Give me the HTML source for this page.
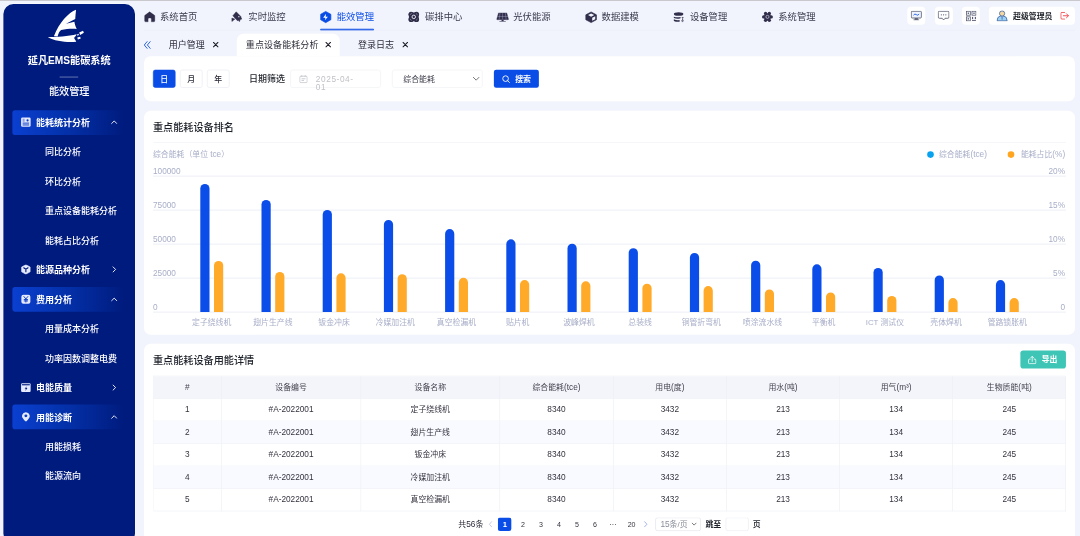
<!DOCTYPE html>
<html lang="zh-CN">
<head>
<meta charset="utf-8">
<title>延凡EMS能碳系统</title>
<style>
*{box-sizing:border-box;margin:0;padding:0}
html,body{width:1080px;height:536px;overflow:hidden;background:#f2f4fd}
body{font-family:"Liberation Sans","Noto Sans CJK SC",sans-serif;position:relative}
#topline{position:absolute;left:0;top:0;width:1080px;height:1px;background:#c9c9cd;z-index:10}
#app{position:absolute;left:0;top:0;width:1920px;height:953px;transform:scale(.5625);transform-origin:0 0;color:#33334a;font-size:16px}
.abs{position:absolute}
/* sidebar */
#side{position:absolute;left:6px;top:7.4px;width:234px;height:960px;background:#001b7e;border-radius:18px;box-shadow:0 0 0 1px rgba(255,255,255,.55)}
#side .title{position:absolute;left:0;width:234px;top:86.4px;height:28px;line-height:28px;text-align:center;color:#fff;font-size:18px;font-weight:700}
#side .bar{position:absolute;left:100px;top:128.7px;width:33px;height:2px;background:rgba(255,255,255,.35)}
#side .sub{position:absolute;left:0;width:234px;top:141.7px;height:28px;line-height:28px;text-align:center;color:#fff;font-size:18px;font-weight:500}
.mi{position:absolute;left:16px;width:198px;height:44px;line-height:44px;color:#fff;font-size:16px;font-weight:500;white-space:nowrap}
.mi.g{font-weight:700}
.mi.on::before{content:"";position:absolute;left:0;top:-1.2px;width:100%;height:44px;background:linear-gradient(90deg,#0a3fd0 0%,#0432ad 45%,rgba(0,27,126,0) 100%);border-radius:5px}
.mi>*{z-index:1}
.mi svg.ic{position:absolute;left:14.8px;top:11.5px;width:18px;height:18px}
.mi .t{position:absolute;left:42.2px;top:0}
.mi .s{position:absolute;left:58px;top:0}
.mi svg.ch{position:absolute;left:174.5px;top:14.5px;width:12px;height:12px}
/* top nav */
.nv{position:absolute;top:16px;height:28px;line-height:28px;font-size:16.6px;color:#3a3a4e;white-space:nowrap}
.nv svg{position:absolute;left:0;top:4px;width:20px;height:20px}
.nv span{position:absolute;left:28.5px;top:0}
.nv.on{color:#0a4de6}
#navline{position:absolute;left:256px;top:52.6px;width:1655px;height:1px;background:#e6e9f6}
#navul{position:absolute;left:569px;top:51.2px;width:96px;height:3px;background:#0a4de6;border-radius:2px}
.ib{position:absolute;top:12px;height:32px;background:#fff;border-radius:7px}
/* tabs */
.tab{position:absolute;top:60px;height:40px;line-height:40px;font-size:16px;color:#2c2c3a;white-space:nowrap}
.tab.on{background:#fff;border-radius:12px 12px 0 0}
.tab .x{position:absolute;top:14px;width:11px;height:11px}
/* panels */
.panel{position:absolute;left:256px;width:1655px;background:#fff;border-radius:12px}
.btn{position:absolute;top:24px;width:40px;height:32px;line-height:30px;text-align:center;font-size:14px;border:1px solid #e4e7f0;border-radius:4px;color:#2c2c3a;background:#fff;font-weight:500}
.btn.on{background:#0a4de6;border-color:#0a4de6;color:#fff}
.ptitle{position:absolute;left:16px;font-size:18px;font-weight:500;color:#1d2129;white-space:nowrap;line-height:28px;height:28px}
/*TBLCSS*/
.tbl{position:absolute;left:16px;top:56.5px;width:1622.4px;height:240px;border-left:1px solid #ebeef5;border-top:1px solid #ebeef5}
.tr{position:absolute;left:0;width:1622.4px;height:40.2px;background:#fff}
.tr.th{background:#f4f5fb}
.tr.ev{background:#f9faff}
.td{position:absolute;top:0;height:40.2px;line-height:39px;text-align:center;font-size:14px;color:#33333f;border-right:1px solid #ebeef5;border-bottom:1px solid #ebeef5;white-space:nowrap}
.th .td{color:#44444f}
.n{font-size:14.7px!important}
.pt{position:absolute;top:309px;height:24px;line-height:24px;white-space:nowrap}
.pn{position:absolute;top:309px;width:32px;height:24px;line-height:24px;text-align:center;font-size:12.6px;color:#33333f}
/*/TBLCSS*/</style>
</head>
<body>
<div id="topline"></div>
<div id="app">
<!--SIDE-->
<div id="side">
<svg class="abs" style="left:65.1px;top:0.1px;width:106.7px;height:78.2px" viewBox="0 0 731 536"><g fill="#fff">
<path d="M440 72 C350 105 235 225 170 395 L215 398 C225 355 240 328 258 318 C320 305 390 300 448 305 C432 270 422 240 420 216 L318 240 L430 185 C432 150 436 110 440 72 Z"/>
<path d="M95 405 C200 402 350 397 447 370 C442 388 426 400 416 416 C428 436 440 452 442 460 C330 472 180 452 95 405 Z"/>
<path d="M478 348 L525 326 L535 352 L490 378 Z"/><path d="M455 410 L490 400 L497 420 L462 434 Z"/><path d="M452 372 L470 364 L475 380 L456 388 Z"/>
</g></svg>
<div class="title">延凡EMS能碳系统</div><div class="bar"></div><div class="sub">能效管理</div>
<div class="mi g on" style="top:189.4px"><svg class="ic" viewBox="0 0 18 18"><rect x="0.5" y="0.8" width="17" height="16.6" rx="2.5" fill="#e6eaff"/><rect x="3.2" y="3" width="3.6" height="5.6" fill="#8fa4ee"/><circle cx="12" cy="6" r="1.9" fill="#0a3cc4"/><rect x="3.2" y="10" width="11.6" height="1.7" fill="#0a3cc4"/><rect x="3.2" y="13.3" width="11.6" height="1.7" fill="#0a3cc4"/></svg><span class="t">能耗统计分析</span><svg class="ch" viewBox="0 0 12 12"><path d="M1.5 8.5 L6 4 L10.5 8.5" fill="none" stroke="#fff" stroke-width="1.6" stroke-linecap="round" stroke-linejoin="round"/></svg></div>
<div class="mi" style="top:241.8px"><span class="s">同比分析</span></div>
<div class="mi" style="top:294.2px"><span class="s">环比分析</span></div>
<div class="mi" style="top:346.5px"><span class="s">重点设备能耗分析</span></div>
<div class="mi" style="top:398.9px"><span class="s">能耗占比分析</span></div>
<div class="mi g" style="top:451.3px"><svg class="ic" viewBox="0 0 18 18"><path d="M9 0.5 L16.6 4.7 V13.3 L9 17.5 L1.4 13.3 V4.7 Z" fill="#e6eaff" stroke="#e6eaff" stroke-width="1" stroke-linejoin="round"/><path d="M5.2 6 L9 8.8 L12.8 6 M9 8.8 V13" fill="none" stroke="#001b7e" stroke-width="2" stroke-linecap="round"/></svg><span class="t">能源品种分析</span><svg class="ch" viewBox="0 0 12 12"><path d="M4 1.5 L8.5 6 L4 10.5" fill="none" stroke="#fff" stroke-width="1.6" stroke-linecap="round" stroke-linejoin="round"/></svg></div>
<div class="mi g on" style="top:503.7px"><svg class="ic" viewBox="0 0 18 18"><rect x="1" y="1" width="16" height="16" rx="3.5" fill="#e6eaff"/><path d="M5.5 4.2 L9 8.4 L12.5 4.2 M9 8.4 V14 M6 9.6 H12 M6 12 H12" fill="none" stroke="#0a3cc4" stroke-width="1.7" stroke-linecap="round" stroke-linejoin="round"/></svg><span class="t">费用分析</span><svg class="ch" viewBox="0 0 12 12"><path d="M1.5 8.5 L6 4 L10.5 8.5" fill="none" stroke="#fff" stroke-width="1.6" stroke-linecap="round" stroke-linejoin="round"/></svg></div>
<div class="mi" style="top:556.1px"><span class="s">用量成本分析</span></div>
<div class="mi" style="top:608.4px"><span class="s">功率因数调整电费</span></div>
<div class="mi g" style="top:660.8px"><svg class="ic" viewBox="0 0 18 18"><rect x="0.5" y="1.5" width="17" height="15.5" rx="2" fill="#e6eaff"/><rect x="2" y="3" width="14" height="2" fill="#001b7e"/><path d="M10.5 6.5 L6.8 11 H9 L8 15 L11.8 9.8 H9.6 Z" fill="#001b7e"/></svg><span class="t">电能质量</span><svg class="ch" viewBox="0 0 12 12"><path d="M4 1.5 L8.5 6 L4 10.5" fill="none" stroke="#fff" stroke-width="1.6" stroke-linecap="round" stroke-linejoin="round"/></svg></div>
<div class="mi g on" style="top:713.2px"><svg class="ic" viewBox="0 0 18 18"><path d="M9 0.8 a7 7 0 0 1 4.2 12.6 L10.2 17 h-2.4 L4.8 13.4 A7 7 0 0 1 9 0.8 Z" fill="#e6eaff"/><circle cx="9" cy="7.3" r="2.6" fill="#0a3cc4"/></svg><span class="t">用能诊断</span><svg class="ch" viewBox="0 0 12 12"><path d="M1.5 8.5 L6 4 L10.5 8.5" fill="none" stroke="#fff" stroke-width="1.6" stroke-linecap="round" stroke-linejoin="round"/></svg></div>
<div class="mi" style="top:765.6px"><span class="s">用能损耗</span></div>
<div class="mi" style="top:818.0px"><span class="s">能源流向</span></div>
</div>
<!--/SIDE-->
<!--NAV-->
<svg class="abs" style="left:248.89px;top:14.22px;width:35.56px;height:32px" viewBox="0 0 596 536"><path d="M285 118 L432 222 Q440 228 440 240 V385 Q440 415 410 415 H336 V330 Q336 300 306 300 H270 Q240 300 240 330 V415 H166 Q136 415 136 385 V240 Q136 228 144 222 Z" fill="#302e4b" stroke="#302e4b" stroke-width="10" stroke-linejoin="round"/></svg>
<div class="nv" style="left:256px"><span>系统首页</span></div>
<svg class="abs" style="left:405.33px;top:14.22px;width:35.56px;height:32px" viewBox="0 0 596 536"><g fill="#302e4b" stroke="#302e4b" stroke-width="14" stroke-linejoin="round"><path d="M250 118 L150 232 L285 380 L415 335 L380 248 Z"/><path d="M122 305 L210 335 L122 405 Z"/><path d="M325 365 L362 355 L355 400 L338 408 Z"/></g><rect x="308" y="242" width="40" height="40" fill="#b9bad0"/></svg>
<div class="nv" style="left:413px"><span>实时监控</span></div>
<svg class="abs" style="left:561.78px;top:14.22px;width:35.56px;height:32px" viewBox="0 0 596 536"><path d="M285 105 L440 192 V353 L285 440 L135 353 V192 Z" fill="#0a4de6" stroke="#0a4de6" stroke-width="20" stroke-linejoin="round"/><path d="M295 175 L210 292 H278 L262 372 L352 262 H285 Z" fill="#fff"/></svg>
<div class="nv on" style="left:570px"><span>能效管理</span></div>
<svg class="abs" style="left:718.22px;top:14.22px;width:35.56px;height:32px" viewBox="0 0 596 536"><g fill="#302e4b"><circle cx="215" cy="190" r="78"/><circle cx="375" cy="190" r="78"/><circle cx="215" cy="345" r="78"/><circle cx="375" cy="345" r="78"/><circle cx="295" cy="268" r="105"/><rect x="150" y="137" width="290" height="262" rx="50"/></g><circle cx="295" cy="268" r="52" fill="#302e4b" stroke="#f2f4fd" stroke-width="26"/><g stroke="#c9cadb" stroke-width="14" stroke-linecap="round"><path d="M195 195 L225 170"/><path d="M370 175 L398 198"/><path d="M192 340 L222 368"/><path d="M368 365 L398 338"/></g></svg>
<div class="nv" style="left:727px"><span>碳排中心</span></div>
<svg class="abs" style="left:876.44px;top:14.22px;width:35.56px;height:32px" viewBox="0 0 596 536"><path d="M170 150 H418 L470 335 Q474 352 456 352 H134 Q116 352 120 335 Z" fill="#302e4b" stroke="#302e4b" stroke-width="10" stroke-linejoin="round"/><path d="M294 155 V350 M135 255 H455 M215 155 L190 350 M375 155 L400 350" stroke="#a9abc4" stroke-width="13" fill="none"/><rect x="262" y="352" width="62" height="45" fill="#302e4b"/><rect x="195" y="395" width="195" height="26" rx="10" fill="#6d6c85"/></svg>
<div class="nv" style="left:884px"><span>光伏能源</span></div>
<svg class="abs" style="left:1032.89px;top:14.22px;width:35.56px;height:32px" viewBox="0 0 596 536"><path d="M300 122 L458 207 V353 L300 438 L142 353 V207 Z" fill="#302e4b" stroke="#302e4b" stroke-width="20" stroke-linejoin="round"/><path d="M300 168 L392 215 L300 262 L208 215 Z" fill="#f2f4fd"/><path d="M332 292 L422 248 V340 L332 386 Z" fill="#f2f4fd"/></svg>
<div class="nv" style="left:1041px"><span>数据建模</span></div>
<svg class="abs" style="left:1189.33px;top:14.22px;width:35.56px;height:32px" viewBox="0 0 596 536"><g fill="#302e4b"><ellipse cx="292" cy="182" rx="142" ry="55"/><path d="M150 262 Q250 300 350 268 V312 Q250 345 150 305 Z"/><path d="M150 340 Q235 378 322 362 V410 Q235 425 150 388 Z"/></g><g stroke="#302e4b" stroke-width="20" fill="none"><path d="M412 285 V375 M385 285 H440"/><circle cx="408" cy="385" r="24"/></g></svg>
<div class="nv" style="left:1198px"><span>设备管理</span></div>
<svg class="abs" style="left:1345.78px;top:14.22px;width:35.56px;height:32px" viewBox="0 0 596 536"><g fill="#302e4b"><circle cx="308" cy="268" r="105"/><circle cx="252" cy="165" r="50"/><circle cx="364" cy="165" r="50"/><circle cx="252" cy="371" r="50"/><circle cx="364" cy="371" r="50"/><circle cx="195" cy="268" r="50"/><circle cx="421" cy="268" r="50"/></g><circle cx="308" cy="268" r="46" fill="#302e4b" stroke="#c9cadb" stroke-width="22"/></svg>
<div class="nv" style="left:1355px"><span>系统管理</span></div>
<div id="navul"></div><div id="navline"></div>
<div class="ib" style="left:1613px;width:32px"><svg class="abs" style="left:6px;top:7px;width:20px;height:18px" viewBox="0 0 20 18"><rect x="1" y="1" width="18" height="12" rx="1.5" fill="#eef3ff" stroke="#555a70" stroke-width="1.5"/><path d="M5 8 Q7.5 4.5 10 7 T15 6" fill="none" stroke="#0a4de6" stroke-width="1.5"/><path d="M7.5 14 H12.5 V15.5 H7.5 Z M5 16.2 H15" fill="#555a70" stroke="#555a70" stroke-width="1.3"/></svg></div>
<div class="ib" style="left:1661.5px;width:32px"><svg class="abs" style="left:5.5px;top:7px;width:21px;height:18px" viewBox="0 0 21 18"><path d="M3 1 H18 Q20 1 20 3 V11.5 Q20 13.5 18 13.5 H13 L10.5 16.5 L8 13.5 H3 Q1 13.5 1 11.5 V3 Q1 1 3 1 Z" fill="#fff" stroke="#555a70" stroke-width="1.5" stroke-linejoin="round"/><g fill="#555a70"><circle cx="6.5" cy="7.3" r="1.1"/><circle cx="10.5" cy="7.3" r="1.1"/><circle cx="14.5" cy="7.3" r="1.1"/></g></svg></div>
<div class="ib" style="left:1710px;width:32px"><svg class="abs" style="left:6.5px;top:6.5px;width:19px;height:19px" viewBox="0 0 19 19"><g fill="none" stroke="#555a70" stroke-width="1.4"><rect x="1" y="1" width="7" height="7"/><rect x="11" y="1" width="7" height="7"/><rect x="1" y="11" width="7" height="7"/></g><g fill="#555a70"><rect x="3.3" y="3.3" width="2.4" height="2.4"/><rect x="13.3" y="3.3" width="2.4" height="2.4"/><rect x="3.3" y="13.3" width="2.4" height="2.4"/><rect x="11" y="11" width="2" height="4"/><rect x="16" y="11" width="2" height="4"/><rect x="11" y="16.5" width="7" height="1.6"/></g></svg></div>
<div class="ib" style="left:1758px;width:153px"><svg class="abs" style="left:13px;top:6px;width:21px;height:20px" viewBox="0 0 21 20"><path d="M1.5 19 Q1.5 11.5 7.5 10.5 L10.5 12.5 L13.5 10.5 Q19.5 11.5 19.5 19 Z" fill="#9fd0f5" stroke="#2c5a9a" stroke-width="1.3" stroke-linejoin="round"/><circle cx="10.5" cy="6" r="4.6" fill="#f7d9a6" stroke="#2c5a9a" stroke-width="1.3"/><path d="M10.5 13 V17" stroke="#2c5a9a" stroke-width="1.2"/></svg><span class="abs" style="left:43px;top:0;line-height:32px;font-size:14px;font-weight:700;color:#1d2129;white-space:nowrap">超级管理员</span><svg class="abs" style="left:127px;top:9px;width:16px;height:14px" viewBox="0 0 16 14"><path d="M7.5 1 H3 Q1 1 1 3 V11 Q1 13 3 13 H7.5" fill="none" stroke="#f5474f" stroke-width="1.7" stroke-linecap="round"/><path d="M5.5 7 H14 M11 3.5 L14.5 7 L11 10.5" fill="none" stroke="#f5474f" stroke-width="1.7" stroke-linecap="round" stroke-linejoin="round"/></svg></div>
<!--/NAV-->
<!--TABS-->
<svg class="abs" style="left:255px;top:72px;width:14px;height:16px" viewBox="0 0 14 16"><path d="M6.5 2 L1.5 8 L6.5 14 M12 2 L7 8 L12 14" fill="none" stroke="#0a4de6" stroke-width="1.5" stroke-linecap="round" stroke-linejoin="round"/></svg>
<div class="tab" style="left:283px;width:122px"><span class="abs" style="left:17px">用户管理</span><svg class="x" style="left:95px" viewBox="0 0 11 11"><path d="M1.5 1.5 L9.5 9.5 M9.5 1.5 L1.5 9.5" stroke="#1d1d2a" stroke-width="2" stroke-linecap="round"/></svg></div>
<div class="tab on" style="left:421px;width:183px"><span class="abs" style="left:16px;letter-spacing:.15px">重点设备能耗分析</span><svg class="x" style="left:157px" viewBox="0 0 11 11"><path d="M1.5 1.5 L9.5 9.5 M9.5 1.5 L1.5 9.5" stroke="#1d1d2a" stroke-width="2" stroke-linecap="round"/></svg></div>
<div class="tab" style="left:619px;width:122px"><span class="abs" style="left:17.5px">登录日志</span><svg class="x" style="left:96px" viewBox="0 0 11 11"><path d="M1.5 1.5 L9.5 9.5 M9.5 1.5 L1.5 9.5" stroke="#1d1d2a" stroke-width="2" stroke-linecap="round"/></svg></div>
<!--/TABS-->
<!--FILTER-->
<div class="panel" style="top:100px;height:80px">
<div class="btn on" style="left:16px">日</div><div class="btn" style="left:64px">月</div><div class="btn" style="left:112px">年</div>
<span class="abs" style="left:186.5px;top:24px;line-height:32px;font-size:16px;color:#1d2129;font-weight:500;white-space:nowrap">日期筛选</span>
<div class="abs" style="left:260px;top:24px;width:160.5px;height:32px;border:1px solid #eeeff3;border-radius:4px">
<svg class="abs" style="left:15px;top:8px;width:15px;height:15px" viewBox="0 0 15 15"><rect x="1" y="2.5" width="13" height="11.5" rx="1.5" fill="none" stroke="#b9bcc6" stroke-width="1.3"/><path d="M4.5 0.8 V3.5 M10.5 0.8 V3.5 M4 7 H11 M4 10 H8.5" stroke="#b9bcc6" stroke-width="1.3" fill="none"/></svg>
<div class="abs" style="left:44.5px;top:8.5px;width:75px;font-size:14.7px;line-height:14.6px;color:#c0c1c6;letter-spacing:1.05px;word-break:break-all">2025-04-01</div></div>
<div class="abs" style="left:441px;top:24px;width:160.5px;height:32px;border:1px solid #eeeff3;border-radius:4px">
<span class="abs" style="left:19px;top:0;line-height:30px;font-size:14px;color:#3c3c4a;white-space:nowrap">综合能耗</span>
<svg class="abs" style="left:142px;top:10px;width:13px;height:10px" viewBox="0 0 13 10"><path d="M1.5 2.5 L6.5 7.5 L11.5 2.5" fill="none" stroke="#555" stroke-width="1.4" stroke-linecap="round" stroke-linejoin="round"/></svg></div>
<div class="abs" style="left:622px;top:24px;width:80px;height:32px;background:#0a4de6;border-radius:4px">
<svg class="abs" style="left:14px;top:8.5px;width:15px;height:15px" viewBox="0 0 15 15"><circle cx="6.8" cy="6.8" r="5" fill="none" stroke="#fff" stroke-width="1.6"/><path d="M10.6 10.6 L13.6 13.6" stroke="#fff" stroke-width="1.6" stroke-linecap="round"/></svg>
<span class="abs" style="left:38px;top:0;line-height:32px;font-size:14px;font-weight:700;color:#fff;white-space:nowrap">搜索</span></div>
</div>
<!--/FILTER-->
<!--CHART-->
<div class="panel" style="top:197px;height:398px"><div class="ptitle" style="top:15.6px">重点能耗设备排名</div>
<svg class="abs" style="left:0;top:0;width:1655px;height:398px" viewBox="144 110.8125 930.9375 223.875" font-size="7.875" fill="#a8aec8" font-family="Liberation Sans,Noto Sans CJK SC,sans-serif">
<rect x="153" y="142" width="913" height="0.6" fill="#eef0f7"/>
<text x="153" y="157.3">综合能耗（单位 <tspan font-size="8.25">tce</tspan>）</text>
<rect x="153" y="175.7" width="913" height="0.8" fill="#e9ebf3"/>
<text x="153" y="174.0" font-size="8.25">100000</text><text x="1065" y="174.0" text-anchor="end" font-size="8.25">20%</text>
<rect x="153" y="209.7" width="913" height="0.8" fill="#e9ebf3"/>
<text x="153" y="208.0" font-size="8.25">75000</text><text x="1065" y="208.0" text-anchor="end" font-size="8.25">15%</text>
<rect x="153" y="243.7" width="913" height="0.8" fill="#e9ebf3"/>
<text x="153" y="242.0" font-size="8.25">50000</text><text x="1065" y="242.0" text-anchor="end" font-size="8.25">10%</text>
<rect x="153" y="277.7" width="913" height="0.8" fill="#e9ebf3"/>
<text x="153" y="276.0" font-size="8.25">25000</text><text x="1065" y="276.0" text-anchor="end" font-size="8.25">5%</text>
<rect x="153" y="311.7" width="913" height="0.8" fill="#e9ebf3"/>
<text x="153" y="310.0" font-size="8.25">0</text><text x="1065" y="310.0" text-anchor="end" font-size="8.25">0</text>
<path d="M200.3 312.1 V188.6 A4.6 4.6 0 0 1 209.5 188.6 V312.1 Z" fill="#0a4de8"/>
<path d="M214.0 312.1 V265.6 A4.6 4.6 0 0 1 223.2 265.6 V312.1 Z" fill="#ffaa28"/>
<text x="211.7" y="325.2" text-anchor="middle">定子绕线机</text>
<path d="M261.5 312.1 V204.6 A4.6 4.6 0 0 1 270.7 204.6 V312.1 Z" fill="#0a4de8"/>
<path d="M275.2 312.1 V276.6 A4.6 4.6 0 0 1 284.4 276.6 V312.1 Z" fill="#ffaa28"/>
<text x="272.9" y="325.2" text-anchor="middle">翅片生产线</text>
<path d="M322.7 312.1 V214.6 A4.6 4.6 0 0 1 331.9 214.6 V312.1 Z" fill="#0a4de8"/>
<path d="M336.4 312.1 V277.9 A4.6 4.6 0 0 1 345.6 277.9 V312.1 Z" fill="#ffaa28"/>
<text x="334.1" y="325.2" text-anchor="middle">钣金冲床</text>
<path d="M383.9 312.1 V224.5 A4.6 4.6 0 0 1 393.1 224.5 V312.1 Z" fill="#0a4de8"/>
<path d="M397.6 312.1 V278.8 A4.6 4.6 0 0 1 406.8 278.8 V312.1 Z" fill="#ffaa28"/>
<text x="395.3" y="325.2" text-anchor="middle">冷媒加注机</text>
<path d="M445.1 312.1 V233.7 A4.6 4.6 0 0 1 454.3 233.7 V312.1 Z" fill="#0a4de8"/>
<path d="M458.8 312.1 V282.4 A4.6 4.6 0 0 1 468.0 282.4 V312.1 Z" fill="#ffaa28"/>
<text x="456.5" y="325.2" text-anchor="middle">真空检漏机</text>
<path d="M506.3 312.1 V243.9 A4.6 4.6 0 0 1 515.5 243.9 V312.1 Z" fill="#0a4de8"/>
<path d="M520.0 312.1 V284.7 A4.6 4.6 0 0 1 529.2 284.7 V312.1 Z" fill="#ffaa28"/>
<text x="517.7" y="325.2" text-anchor="middle">贴片机</text>
<path d="M567.5 312.1 V248.3 A4.6 4.6 0 0 1 576.7 248.3 V312.1 Z" fill="#0a4de8"/>
<path d="M581.2 312.1 V285.9 A4.6 4.6 0 0 1 590.4 285.9 V312.1 Z" fill="#ffaa28"/>
<text x="578.9" y="325.2" text-anchor="middle">波峰焊机</text>
<path d="M628.7 312.1 V252.8 A4.6 4.6 0 0 1 637.9 252.8 V312.1 Z" fill="#0a4de8"/>
<path d="M642.4 312.1 V288.3 A4.6 4.6 0 0 1 651.6 288.3 V312.1 Z" fill="#ffaa28"/>
<text x="640.1" y="325.2" text-anchor="middle">总装线</text>
<path d="M689.9 312.1 V257.6 A4.6 4.6 0 0 1 699.1 257.6 V312.1 Z" fill="#0a4de8"/>
<path d="M703.6 312.1 V290.7 A4.6 4.6 0 0 1 712.8 290.7 V312.1 Z" fill="#ffaa28"/>
<text x="701.3" y="325.2" text-anchor="middle">铜管折弯机</text>
<path d="M751.1 312.1 V265.3 A4.6 4.6 0 0 1 760.3 265.3 V312.1 Z" fill="#0a4de8"/>
<path d="M764.8 312.1 V294.0 A4.6 4.6 0 0 1 774.0 294.0 V312.1 Z" fill="#ffaa28"/>
<text x="762.5" y="325.2" text-anchor="middle">喷涂流水线</text>
<path d="M812.3 312.1 V268.9 A4.6 4.6 0 0 1 821.5 268.9 V312.1 Z" fill="#0a4de8"/>
<path d="M826.0 312.1 V297.0 A4.6 4.6 0 0 1 835.2 297.0 V312.1 Z" fill="#ffaa28"/>
<text x="823.7" y="325.2" text-anchor="middle">平衡机</text>
<path d="M873.5 312.1 V272.5 A4.6 4.6 0 0 1 882.7 272.5 V312.1 Z" fill="#0a4de8"/>
<path d="M887.2 312.1 V300.6 A4.6 4.6 0 0 1 896.4 300.6 V312.1 Z" fill="#ffaa28"/>
<text x="884.9" y="325.2" text-anchor="middle">ICT 测试仪</text>
<path d="M934.7 312.1 V280.0 A4.6 4.6 0 0 1 943.9 280.0 V312.1 Z" fill="#0a4de8"/>
<path d="M948.4 312.1 V302.7 A4.6 4.6 0 0 1 957.6 302.7 V312.1 Z" fill="#ffaa28"/>
<text x="946.1" y="325.2" text-anchor="middle">壳体焊机</text>
<path d="M995.9 312.1 V284.7 A4.6 4.6 0 0 1 1005.1 284.7 V312.1 Z" fill="#0a4de8"/>
<path d="M1009.6 312.1 V302.7 A4.6 4.6 0 0 1 1018.8 302.7 V312.1 Z" fill="#ffaa28"/>
<text x="1007.3" y="325.2" text-anchor="middle">管路锁胀机</text>
<circle cx="930.5" cy="154.6" r="3.3" fill="#08a2ee"/><text x="939" y="157.3">综合能耗<tspan font-size="8.25">(tce)</tspan></text>
<circle cx="1011" cy="154.6" r="3.3" fill="#ffa51f"/><text x="1020.9" y="157.3">能耗占比<tspan font-size="8.25">(%)</tspan></text>
</svg></div>
<!--/CHART-->
<!--TABLE-->
<div class="panel" style="top:611px;height:380px"><div class="ptitle" style="top:15.6px">重点能耗设备用能详情</div>
<div class="abs" style="left:1558px;top:12.2px;width:81px;height:32px;background:#3fc5b5;border-radius:5px"><svg class="abs" style="left:13px;top:8.5px;width:16px;height:16px" viewBox="0 0 16 16"><path d="M4.5 6.5 H3 Q1.5 6.5 1.5 8 V13 Q1.5 14.5 3 14.5 H13 Q14.5 14.5 14.5 13 V8 Q14.5 6.5 13 6.5 H11.5 M8 10.5 V1.8 M5.2 4.4 L8 1.6 L10.8 4.4" fill="none" stroke="#fff" stroke-width="1.4" stroke-linecap="round" stroke-linejoin="round"/></svg><span class="abs" style="left:38px;top:0;line-height:32px;font-size:14px;font-weight:700;color:#fff;white-space:nowrap">导出</span></div>
<div class="tbl">
<div class="tr th" style="top:0px"><div class="td n" style="left:0.0px;width:120.9px">#</div><div class="td" style="left:120.9px;width:248.1px">设备编号</div><div class="td" style="left:369.0px;width:246.8px">设备名称</div><div class="td" style="left:615.8px;width:202.0px">综合能耗<span class="n">(tce)</span></div><div class="td" style="left:817.8px;width:201.2px">用电<span class="n">(</span>度<span class="n">)</span></div><div class="td" style="left:1019.0px;width:201.1px">用水<span class="n">(</span>吨<span class="n">)</span></div><div class="td" style="left:1220.1px;width:201.2px">用气<span class="n">(m³)</span></div><div class="td" style="left:1421.3px;width:201.1px">生物质能<span class="n">(</span>吨<span class="n">)</span></div></div>
<div class="tr " style="top:40.0px"><div class="td n" style="left:0.0px;width:120.9px">1</div><div class="td n" style="left:120.9px;width:248.1px">#A-2022001</div><div class="td" style="left:369.0px;width:246.8px">定子绕线机</div><div class="td n" style="left:615.8px;width:202.0px">8340</div><div class="td n" style="left:817.8px;width:201.2px">3432</div><div class="td n" style="left:1019.0px;width:201.1px">213</div><div class="td n" style="left:1220.1px;width:201.2px">134</div><div class="td n" style="left:1421.3px;width:201.1px">245</div></div>
<div class="tr ev" style="top:80.2px"><div class="td n" style="left:0.0px;width:120.9px">2</div><div class="td n" style="left:120.9px;width:248.1px">#A-2022001</div><div class="td" style="left:369.0px;width:246.8px">翅片生产线</div><div class="td n" style="left:615.8px;width:202.0px">8340</div><div class="td n" style="left:817.8px;width:201.2px">3432</div><div class="td n" style="left:1019.0px;width:201.1px">213</div><div class="td n" style="left:1220.1px;width:201.2px">134</div><div class="td n" style="left:1421.3px;width:201.1px">245</div></div>
<div class="tr " style="top:120.4px"><div class="td n" style="left:0.0px;width:120.9px">3</div><div class="td n" style="left:120.9px;width:248.1px">#A-2022001</div><div class="td" style="left:369.0px;width:246.8px">钣金冲床</div><div class="td n" style="left:615.8px;width:202.0px">8340</div><div class="td n" style="left:817.8px;width:201.2px">3432</div><div class="td n" style="left:1019.0px;width:201.1px">213</div><div class="td n" style="left:1220.1px;width:201.2px">134</div><div class="td n" style="left:1421.3px;width:201.1px">245</div></div>
<div class="tr ev" style="top:160.60000000000002px"><div class="td n" style="left:0.0px;width:120.9px">4</div><div class="td n" style="left:120.9px;width:248.1px">#A-2022001</div><div class="td" style="left:369.0px;width:246.8px">冷媒加注机</div><div class="td n" style="left:615.8px;width:202.0px">8340</div><div class="td n" style="left:817.8px;width:201.2px">3432</div><div class="td n" style="left:1019.0px;width:201.1px">213</div><div class="td n" style="left:1220.1px;width:201.2px">134</div><div class="td n" style="left:1421.3px;width:201.1px">245</div></div>
<div class="tr " style="top:200.8px"><div class="td n" style="left:0.0px;width:120.9px">5</div><div class="td n" style="left:120.9px;width:248.1px">#A-2022001</div><div class="td" style="left:369.0px;width:246.8px">真空检漏机</div><div class="td n" style="left:615.8px;width:202.0px">8340</div><div class="td n" style="left:817.8px;width:201.2px">3432</div><div class="td n" style="left:1019.0px;width:201.1px">213</div><div class="td n" style="left:1220.1px;width:201.2px">134</div><div class="td n" style="left:1421.3px;width:201.1px">245</div></div>
</div>
<span class="pt" style="left:558.8px;font-size:14px;color:#2c2c3a">共<span class="n">56</span>条</span>
<svg class="abs" style="left:611.6px;top:315px;width:8px;height:12px" viewBox="0 0 8 12"><path d="M6 1.5 L2 6 L6 10.5" fill="none" stroke="#b4bce0" stroke-width="1.4" stroke-linecap="round" stroke-linejoin="round"/></svg>
<div class="abs" style="left:629.3px;top:309px;width:24px;height:24px;line-height:24px;background:#0a4de6;border-radius:4px;color:#fff;font-size:13px;font-weight:700;text-align:center">1</div>
<div class="pn" style="left:657.6px">2</div>
<div class="pn" style="left:689.8px">3</div>
<div class="pn" style="left:721.8px">4</div>
<div class="pn" style="left:753.8px">5</div>
<div class="pn" style="left:785.8px">6</div>
<div class="pn" style="left:817.8px">···</div>
<div class="pn" style="left:850.8px">20</div>
<svg class="abs" style="left:888.0px;top:315px;width:8px;height:12px" viewBox="0 0 8 12"><path d="M2 1.5 L6 6 L2 10.5" fill="none" stroke="#8fa0e0" stroke-width="1.4" stroke-linecap="round" stroke-linejoin="round"/></svg>
<div class="abs" style="left:909.0px;top:309px;width:81px;height:24px;border:1px solid #d9dce6;border-radius:4px"><span class="abs" style="left:8px;top:0;line-height:22px;font-size:14px;color:#8a8d99;white-space:nowrap"><span class="n">15</span>条/页</span><svg class="abs" style="left:63px;top:7px;width:10px;height:8px" viewBox="0 0 10 8"><path d="M1.5 2 L5 5.5 L8.5 2" fill="none" stroke="#555" stroke-width="1.4" stroke-linecap="round" stroke-linejoin="round"/></svg></div>
<span class="pt" style="left:998.0px;font-size:14px;color:#1d2129;font-weight:700">跳至</span>
<div class="abs" style="left:1034.0px;top:309px;width:40.5px;height:24px;border:1px solid #e4e7f0;border-radius:4px"></div>
<span class="pt" style="left:1082.3px;font-size:14px;color:#1d2129;font-weight:500">页</span>
</div>
<!--/TABLE-->
</div>
</body>
</html>
